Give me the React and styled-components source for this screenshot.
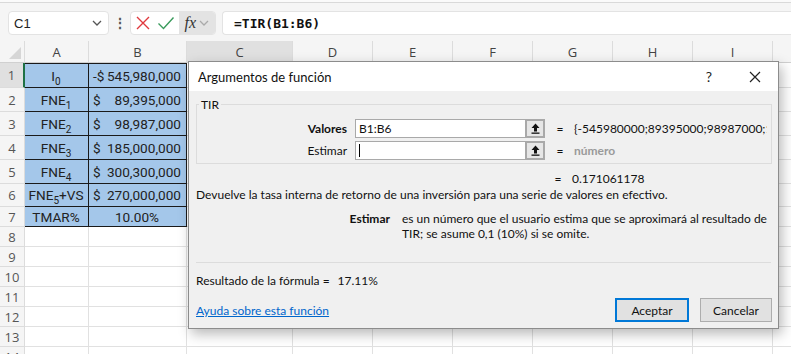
import React from "react";
import styled, { createGlobalStyle } from "styled-components";

const Global = createGlobalStyle`
  html, body { margin: 0; padding: 0; background: #ffffff; }
  body { width: 791px; height: 354px; overflow: hidden; }
`;

const Page = styled.div`
  position: relative;
  width: 791px;
  height: 354px;
  overflow: hidden;
  background: #f5f5f5;
  font-family: "Lato", "Liberation Sans", sans-serif;
`;

const RibbonEdge = styled.div`
  height: 2px;
  background: #fafafa;
  border-bottom: 1px solid #d9d9d9;
`;

const FormulaBar = styled.div`
  display: flex;
  align-items: center;
  height: 24px;
  padding: 8px 0 5px 8px;
`;

const NameBox = styled.div`
  box-sizing: border-box;
  width: 101px;
  height: 24px;
  display: flex;
  align-items: center;
  justify-content: space-between;
  padding: 0 6px 0 5px;
  background: #fff;
  border: 1px solid #e3e3e3;
  border-radius: 4px;
  font-family: "Liberation Sans", sans-serif;
  font-size: 13px;
  color: #222;
`;

const Dots = styled.div`
  width: 21px;
  text-align: center;
  font-size: 14px;
  font-weight: bold;
  color: #555;
  line-height: 1;
`;

const FnBox = styled.div`
  box-sizing: border-box;
  height: 24px;
  width: 86px;
  display: flex;
  align-items: center;
  padding-left: 2px;
  gap: 3px;
  background: #fff;
  border: 1px solid #e3e3e3;
  border-radius: 4px;
  overflow: hidden;
`;

const IconBtn = styled.div`
  width: 22px;
  height: 22px;
  display: flex;
  align-items: center;
  justify-content: center;
`;

const FxBtn = styled.div`
  display: flex;
  align-items: center;
  gap: 3px;
  height: 24px;
  padding: 0 6px 0 5px;
  background: #e3e3e3;
  font-family: "Liberation Serif", serif;
  font-style: italic;
  font-size: 16px;
  color: #333;
`;

const FormulaInput = styled.div`
  flex: 1;
  box-sizing: border-box;
  height: 24px;
  margin-left: 6px;
  display: flex;
  align-items: center;
  padding-left: 11px;
  background: #fff;
  border: 1px solid #e3e3e3;
  border-right: none;
  border-radius: 4px 0 0 4px;
  font-family: "DejaVu Sans Mono", monospace;
  font-weight: bold;
  font-size: 13px;
  color: #111;
`;

const Sheet = styled.div`
  margin-top: 1px;
  background: #fff;
  display: flex;
  flex-direction: column;
`;

const Row = styled.div`
  display: flex;
  height: ${(p) => p.$h}px;
  flex: none;
`;

const HeaderCell = styled.div`
  box-sizing: border-box;
  width: ${(p) => p.$w}px;
  flex: none;
  display: flex;
  align-items: center;
  justify-content: center;
  background: ${(p) => (p.$active ? "#e0e0e0" : "#f5f5f5")};
  border-right: 1px solid #dcdcdc;
  border-bottom: 1px solid #d0d0d0;
  font-family: "Open Sans", "Liberation Sans", sans-serif;
  font-size: 13px;
  color: #444;
  position: relative;
`;

const Corner = styled.div`
  position: absolute;
  right: 3px;
  bottom: 3px;
  width: 0;
  height: 0;
  border-left: 12px solid transparent;
  border-bottom: 12px solid #d6d6d6;
`;

const RowHead = styled.div`
  box-sizing: border-box;
  width: 25px;
  flex: none;
  display: flex;
  align-items: center;
  justify-content: center;
  background: ${(p) => (p.$active ? "#e0e0e0" : "#f5f5f5")};
  border-right: ${(p) => (p.$active ? "2px solid #1e7145" : "1px solid #dcdcdc")};
  border-bottom: 1px solid #dcdcdc;
  font-family: "Open Sans", "Liberation Sans", sans-serif;
  font-size: 13px;
  color: #555;
`;

const Cell = styled.div`
  box-sizing: border-box;
  width: ${(p) => p.$w}px;
  flex: none;
  display: flex;
  align-items: center;
  justify-content: ${(p) => p.$justify || "center"};
  padding: 0 5px 0 4px;
  background: ${(p) => (p.$fill ? "#a4c7ea" : "#fff")};
  border-right: 1px solid ${(p) => (p.$fill ? "#1a1a1a" : "#e1e1e1")};
  border-bottom: 1px solid ${(p) => (p.$fill ? "#1a1a1a" : "#e1e1e1")};
  border-top: ${(p) => (p.$top ? "1px solid #1a1a1a" : "none")};
  font-family: "Roboto", "Liberation Sans", sans-serif;
  font-size: 13.6px;
  color: #222;
  white-space: nowrap;
  sub {
    font-size: 10px;
    vertical-align: -4px;
    line-height: 0;
  }
`;

/* dialog */
const Dialog = styled.div`
  position: absolute;
  left: 188px;
  top: 61px;
  width: 591px;
  height: 268px;
  box-sizing: border-box;
  background: #f0f0f0;
  border: 1px solid #8c8c8c;
  box-shadow: 3px 5px 12px rgba(0, 0, 0, 0.28);
  display: flex;
  flex-direction: column;
  font-size: 12px;
  color: #111;
`;

const TitleBar = styled.div`
  height: 29px;
  flex: none;
  background: #fff;
  display: flex;
  align-items: center;
  padding-left: 9px;
  font-size: 13px;
`;

const Title = styled.div`
  flex: 1;
`;

const TitleBtn = styled.div`
  width: 46px;
  display: flex;
  justify-content: center;
  font-size: 14px;
  color: #222;
`;

const Body = styled.div`
  flex: 1;
  min-width: 0;
  padding: 6px 6px 6px 7px;
  display: flex;
  flex-direction: column;
`;

const Group = styled.fieldset`
  margin: 0;
  padding: 0;
  min-width: 0;
  min-inline-size: 0;
  height: 67px;
  box-sizing: border-box;
  border: 1px solid #dcdcdc;
  border-radius: 0;
  legend {
    padding: 0 2px;
    margin-left: 2px;
    font-size: 12px;
  }
`;

const GroupRows = styled.div`
  display: flex;
  flex-direction: column;
  gap: 3px;
  padding-top: 7px;
  padding-right: 4px;
  overflow: hidden;
`;

const ArgRow = styled.div`
  display: flex;
  align-items: center;
  height: 19px;
  min-width: 0;
`;

const ArgLabel = styled.div`
  width: 150px;
  flex: none;
  text-align: right;
  font-weight: ${(p) => (p.$bold ? 700 : 400)};
  padding-right: 8px;
`;

const ArgInput = styled.div`
  box-sizing: border-box;
  width: 190px;
  flex: none;
  height: 19px;
  background: #fff;
  border: 1px solid #a9a9a9;
  display: flex;
  align-items: center;
  padding-left: 3px;
  position: relative;
`;

const Caret = styled.span`
  width: 1px;
  height: 13px;
  background: #000;
`;

const RefBtn = styled.div`
  position: absolute;
  right: -1px;
  top: -1px;
  width: 20px;
  height: 19px;
  box-sizing: border-box;
  background: #e6e6e6;
  border: 2px solid #a9a9a9;
  display: flex;
  align-items: center;
  justify-content: center;
`;

const Eq = styled.div`
  width: 28px;
  text-align: center;
  padding-left: 1px;
  flex: none;
`;

const ArgValue = styled.div`
  flex: 1;
  min-width: 0;
  overflow: hidden;
  white-space: nowrap;
  color: ${(p) => (p.$muted ? "#9a9a9a" : "#111")};
  font-weight: ${(p) => (p.$muted ? 700 : 400)};
`;

const ResultRow = styled.div`
  display: flex;
  align-items: center;
  height: 16px;
  margin-top: 6px;
  padding-left: 347px;
`;

const Description = styled.div`
  height: 17px;
  line-height: 17px;
`;

const HelpBlock = styled.div`
  display: flex;
  margin-top: 8px;
  line-height: 15px;
`;

const HelpLabel = styled.div`
  width: 194px;
  text-align: right;
  font-weight: 700;
  flex: none;
`;

const HelpText = styled.div`
  padding-left: 12px;
  width: 368px;
`;

const Separator = styled.div`
  margin-top: auto;
  height: 1px;
  background: #dcdcdc;
  margin-right: 1px;
`;

const FormulaResult = styled.div`
  margin-top: 10px;
  height: 16px;
  span {
    margin-left: 8px;
  }
`;

const Footer = styled.div`
  display: flex;
  align-items: center;
  margin-top: 9px;
  gap: 11px;
`;

const HelpLink = styled.a`
  flex: 1;
  color: #0066cc;
  text-decoration: underline;
  font-size: 12px;
`;

const Button = styled.div`
  box-sizing: border-box;
  width: ${(p) => (p.$primary ? 74 : 72)}px;
  height: 24px;
  display: flex;
  align-items: center;
  justify-content: center;
  background: #e1e1e1;
  border: ${(p) => (p.$primary ? "2px solid #0078d7" : "1px solid #adadad")};
  font-size: 12px;
  color: #111;
`;

const cols = [
  { key: "A", w: 64 },
  { key: "B", w: 98 },
  { key: "C", w: 106 },
  { key: "D", w: 80 },
  { key: "E", w: 80 },
  { key: "F", w: 80 },
  { key: "G", w: 80 },
  { key: "H", w: 80 },
  { key: "I", w: 80 },
  { key: "", w: 80 },
];

const data = [
  { a: <>I<sub>0</sub></>, sign: "-$", num: "545,980,000", h: 25 },
  { a: <>FNE<sub>1</sub></>, sign: "$", num: "89,395,000", h: 24 },
  { a: <>FNE<sub>2</sub></>, sign: "$", num: "98,987,000", h: 24 },
  { a: <>FNE<sub>3</sub></>, sign: "$", num: "185,000,000", h: 24 },
  { a: <>FNE<sub>4</sub></>, sign: "$", num: "300,300,000", h: 24 },
  { a: <>FNE<sub>5</sub>+VS</>, sign: "$", num: "270,000,000", h: 23 },
  { a: "TMAR%", pct: "10.00%", h: 20 },
];

const Chevron = ({ color = "#555" }) => (
  <svg width="10" height="6" viewBox="0 0 10 6">
    <path d="M1 1l4 4 4-4" fill="none" stroke={color} strokeWidth="1.3" />
  </svg>
);

const UpArrow = () => (
  <svg width="9" height="11" viewBox="0 0 9 11">
    <path d="M4.5 0.5L0.5 5h2.5v3.5h3V5h2.5z" fill="#111" />
    <rect x="0.5" y="9.5" width="8" height="1.3" fill="#111" />
  </svg>
);

function Spreadsheet() {
  const emptyRows = [8, 9, 10, 11, 12, 13, 14];
  return (
    <Sheet>
      <Row $h={22}>
        <HeaderCell $w={25}>
          <Corner />
        </HeaderCell>
        {cols.map((c, i) => (
          <HeaderCell key={i} $w={c.w} $active={c.key === "C"}>
            {c.key}
          </HeaderCell>
        ))}
      </Row>
      {data.map((r, i) => (
        <Row key={i} $h={r.h}>
          <RowHead $active={i === 0}>{i + 1}</RowHead>
          <Cell $w={64} $fill $top={i === 0}>
            <span>{r.a}</span>
          </Cell>
          {r.pct ? (
            <Cell $w={98} $fill>
              {r.pct}
            </Cell>
          ) : (
            <Cell $w={98} $fill $top={i === 0} $justify="space-between">
              <span>{r.sign}</span>
              <span>{r.num}</span>
            </Cell>
          )}
          {cols.slice(2).map((c, j) => (
            <Cell key={j} $w={c.w} />
          ))}
        </Row>
      ))}
      {emptyRows.map((n) => (
        <Row key={n} $h={20}>
          <RowHead>{n}</RowHead>
          {cols.map((c, j) => (
            <Cell key={j} $w={c.w} />
          ))}
        </Row>
      ))}
    </Sheet>
  );
}

function FunctionDialog() {
  return (
    <Dialog>
      <TitleBar>
        <Title>Argumentos de función</Title>
        <TitleBtn>?</TitleBtn>
        <TitleBtn>
          <svg width="12" height="12" viewBox="0 0 12 12">
            <path d="M1 1l10 10M11 1L1 11" stroke="#222" strokeWidth="1.2" />
          </svg>
        </TitleBtn>
      </TitleBar>
      <Body>
        <Group>
          <legend>TIR</legend>
          <GroupRows>
            <ArgRow>
              <ArgLabel $bold>Valores</ArgLabel>
              <ArgInput>
                B1:B6
                <RefBtn>
                  <UpArrow />
                </RefBtn>
              </ArgInput>
              <Eq>=</Eq>
              <ArgValue>{"{-545980000;89395000;98987000;185000000;300300000;270000000}"}</ArgValue>
            </ArgRow>
            <ArgRow>
              <ArgLabel>Estimar</ArgLabel>
              <ArgInput>
                <Caret />
                <RefBtn>
                  <UpArrow />
                </RefBtn>
              </ArgInput>
              <Eq>=</Eq>
              <ArgValue $muted>número</ArgValue>
            </ArgRow>
          </GroupRows>
        </Group>
        <ResultRow>
          <Eq>=</Eq>
          <span>0.171061178</span>
        </ResultRow>
        <Description>
          Devuelve la tasa interna de retorno de una inversión para una serie de valores en efectivo.
        </Description>
        <HelpBlock>
          <HelpLabel>Estimar</HelpLabel>
          <HelpText>
            es un número que el usuario estima que se aproximará al resultado de TIR; se asume 0,1 (10%) si se omite.
          </HelpText>
        </HelpBlock>
        <Separator />
        <FormulaResult>
          Resultado de la fórmula =<span>17.11%</span>
        </FormulaResult>
        <Footer>
          <HelpLink>Ayuda sobre esta función</HelpLink>
          <Button $primary>Aceptar</Button>
          <Button>Cancelar</Button>
        </Footer>
      </Body>
    </Dialog>
  );
}

export default function App() {
  return (
    <Page>
      <Global />
      <RibbonEdge />
      <FormulaBar>
        <NameBox>
          <span>C1</span>
          <Chevron />
        </NameBox>
        <Dots>⋮</Dots>
        <FnBox>
          <IconBtn>
            <svg width="16" height="16" viewBox="0 0 16 16">
              <path d="M2 2l12 12M14 2L2 14" stroke="#e0393e" strokeWidth="1.4" />
            </svg>
          </IconBtn>
          <IconBtn>
            <svg width="18" height="16" viewBox="0 0 18 16">
              <path d="M1.5 8.5l5 5L16.5 2.5" fill="none" stroke="#3a9b5c" strokeWidth="1.4" />
            </svg>
          </IconBtn>
          <FxBtn>
            fx
            <Chevron color="#aaa" />
          </FxBtn>
        </FnBox>
        <FormulaInput>=TIR(B1:B6)</FormulaInput>
      </FormulaBar>
      <Spreadsheet />
      <FunctionDialog />
    </Page>
  );
}
